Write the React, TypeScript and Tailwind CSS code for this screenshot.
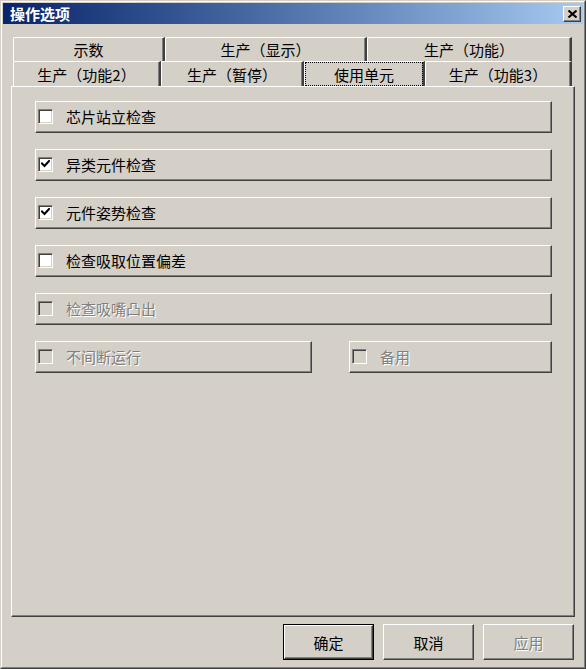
import React from "react";

const FONT = { fontFamily: '"Noto Sans CJK SC", "Noto Sans", sans-serif' };

function CheckBox({ checked, disabled }: { checked?: boolean; disabled?: boolean }) {
  return (
    <div
      className={`w-[15px] h-[15px] shrink-0 border border-t-[#808080] border-l-[#808080] border-r-white border-b-white shadow-[inset_1px_1px_0_#404040,inset_-1px_-1px_0_#d4d0c8] flex items-center justify-center ${
        disabled ? "bg-[#d4d0c8]" : "bg-white"
      }`}
    >
      {checked && (
        <svg width="9" height="8" viewBox="0 0 9 8">
          <path d="M1 3.5 L3.5 6 L8 1" stroke="#000" strokeWidth="2" fill="none" strokeLinecap="square" />
        </svg>
      )}
    </div>
  );
}

function Row({
  label,
  checked,
  disabled,
  className = "",
}: {
  label: string;
  checked?: boolean;
  disabled?: boolean;
  className?: string;
}) {
  return (
    <div
      className={`h-[32px] flex items-center pl-[2px] pb-[2px] border border-t-white border-l-white border-r-[#404040] border-b-[#404040] shadow-[inset_-1px_-1px_0_#808080] ${className}`}
    >
      <CheckBox checked={checked} disabled={disabled} />
      <span
        className={`ml-[13px] text-[15px] leading-none ${
          disabled ? "text-[#808080] [text-shadow:1px_1px_0_#ffffff]" : "text-black"
        }`}
      >
        {label}
      </span>
    </div>
  );
}

function Tab({ label, w, selected }: { label: string; w: string; selected?: boolean }) {
  return (
    <div
      className={`${w} h-full shrink-0 border-t border-l border-t-white border-l-white border-r-2 border-r-[#404040] shadow-[inset_-1px_0_0_#808080] rounded-tl-[2px] flex items-center justify-center text-[15px] text-black leading-none p-0`}
    >
      {selected ? (
        <div className="w-full h-full border border-dotted border-black flex items-center justify-center">
          {label}
        </div>
      ) : (
        label
      )}
    </div>
  );
}

function Button({ label, isDefault, disabled }: { label: string; isDefault?: boolean; disabled?: boolean }) {
  const inner = (
    <div
      className={`w-full h-full flex items-center justify-center border border-t-white border-l-white border-r-[#404040] border-b-[#404040] shadow-[inset_-1px_-1px_0_#808080] text-[15px] leading-none ${
        disabled ? "text-[#808080] [text-shadow:1px_1px_0_#ffffff]" : "text-black"
      }`}
    >
      {label}
    </div>
  );
  return (
    <div className={`w-[91px] h-[36px] ${isDefault ? "border border-black" : ""}`}>{inner}</div>
  );
}

export default function App() {
  return (
    <div style={FONT} className="w-[586px] h-[669px] bg-[#d4d0c8]">
      <div className="w-full h-full border border-t-[#d4d0c8] border-l-[#d4d0c8] border-r-[#404040] border-b-[#404040]">
        <div className="w-full h-full border border-t-white border-l-white border-r-[#808080] border-b-[#808080] p-[1px] flex flex-col">
          {/* Title bar */}
          <div className="h-[21px] shrink-0 bg-gradient-to-r from-[#0a246a] to-[#a6caf0] flex items-center justify-between pl-[7px] pr-[2px]">
            <span className="text-white font-bold text-[15px] leading-none">操作选项</span>
            <div className="w-[18px] h-[16px] bg-[#d4d0c8] border border-t-white border-l-white border-r-[#404040] border-b-[#404040] shadow-[inset_-1px_-1px_0_#808080] flex items-center justify-center">
              <svg width="9" height="8" viewBox="0 0 9 8">
                <path d="M0.5 0.5 L8.5 7.5 M8.5 0.5 L0.5 7.5" stroke="#000" strokeWidth="2" />
              </svg>
            </div>
          </div>

          {/* Tabs */}
          <div className="mt-[13px] pl-[10px] flex flex-col">
            <div className="h-[24px] flex">
              <Tab label="示数" w="w-[152px]" />
              <Tab label="生产（显示）" w="w-[202px]" />
              <Tab label="生产（功能）" w="w-[205px]" />
            </div>
            <div className="h-[25px] flex">
              <Tab label="生产（功能2）" w="w-[148px]" />
              <Tab label="生产（暂停）" w="w-[143px]" />
              <Tab label="使用单元" w="w-[121px]" selected />
              <Tab label="生产（功能3）" w="w-[147px]" />
            </div>
          </div>

          {/* Panel */}
          <div className="ml-[8px] w-[564px] h-[531px] border border-t-white border-l-white border-r-[#404040] border-b-[#404040] shadow-[inset_-1px_-1px_0_#808080] pt-[14px] pl-[23px] pr-[22px] flex flex-col gap-[16px]">
            <Row label="芯片站立检查" className="w-[517px]" />
            <Row label="异类元件检查" checked className="w-[517px]" />
            <Row label="元件姿势检查" checked className="w-[517px]" />
            <Row label="检查吸取位置偏差" className="w-[517px]" />
            <Row label="检查吸嘴凸出" disabled className="w-[517px]" />
            <div className="flex w-[517px] justify-between">
              <Row label="不间断运行" disabled className="w-[277px]" />
              <Row label="备用" disabled className="w-[203px]" />
            </div>
          </div>

          {/* Buttons */}
          <div className="mt-[7px] flex justify-end gap-[9px] pr-[9px]">
            <Button label="确定" isDefault />
            <Button label="取消" />
            <Button label="应用" disabled />
          </div>
        </div>
      </div>
    </div>
  );
}
